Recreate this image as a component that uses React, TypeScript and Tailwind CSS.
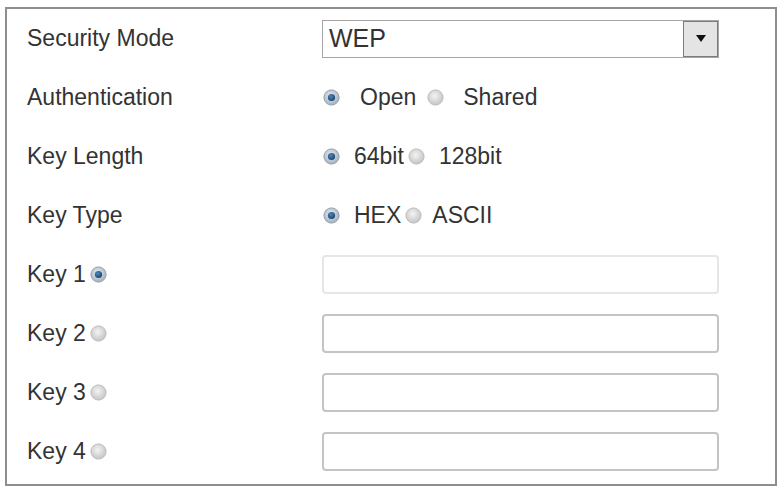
import * as React from 'react';

function Radio({ checked }: { checked?: boolean }) {
    return (
        <svg width="17" height="17" viewBox="0 0 17 17" className="shrink-0">
            <defs>
                <radialGradient id="rOff" cx="45%" cy="40%" r="60%">
                    <stop offset="0%" stopColor="#f4f4f4" />
                    <stop offset="100%" stopColor="#c4c4c4" />
                </radialGradient>
                <radialGradient id="rOn" cx="45%" cy="40%" r="60%">
                    <stop offset="0%" stopColor="#e8eef4" />
                    <stop offset="100%" stopColor="#a3b0bd" />
                </radialGradient>
                <radialGradient id="rDot" cx="40%" cy="35%" r="65%">
                    <stop offset="0%" stopColor="#4f86b8" />
                    <stop offset="100%" stopColor="#1c466e" />
                </radialGradient>
            </defs>
            <circle cx="8.5" cy="8.5" r="7.6" fill={checked ? 'url(#rOn)' : 'url(#rOff)'} stroke={checked ? '#939fab' : '#bdbdbd'} strokeWidth="1" />
            {checked && <circle cx="8.5" cy="8.5" r="3.6" fill="url(#rDot)" />}
        </svg>
    );
}

function Row({ label, children }: { label: React.ReactNode; children?: React.ReactNode }) {
    return (
        <div className="flex items-center h-[59px]">
            <div className="w-[315px] pl-[20px] flex items-center shrink-0">{label}</div>
            <div className="flex items-center">{children}</div>
        </div>
    );
}

function KeyInput({ faint }: { faint?: boolean }) {
    return (
        <div
            className={
                faint
                    ? 'w-[397px] h-[39px] rounded-[4px] border-2 border-[#e6e6e6] bg-white'
                    : 'w-[397px] h-[39px] rounded-[4px] border-2 border-[#c4c4c4] bg-white'
            }
        />
    );
}

export default function App() {
    return (
        <div className="w-[778px] h-[490px] bg-white pt-[7px] pl-[5px]" style={{ fontFamily: '"Liberation Sans", Arial, sans-serif' }}>
            <div className="w-[772px] h-[479px] border-2 border-[#8e8e8e] text-[23px] text-[#333] leading-none">
                <Row label="Security Mode">
                    <div className="w-[397px] h-[38px] border border-[#a6a6a6] flex items-stretch bg-white">
                        <div className="flex-1 flex items-center pl-[6px] text-[25px] text-[#333]">WEP</div>
                        <div className="w-[35px] border border-[#7c7c7c] bg-[#e4e4e4] flex items-center justify-center">
                            <svg width="10" height="7" viewBox="0 0 10 7">
                                <path d="M0 0 L10 0 L5 7 Z" fill="#111" />
                            </svg>
                        </div>
                    </div>
                </Row>
                <Row label="Authentication">
                    <div className="pl-[1px] flex items-center">
                        <Radio checked />
                        <span className="ml-[20px]">Open</span>
                        <span className="ml-[11px]"><Radio /></span>
                        <span className="ml-[19px]">Shared</span>
                    </div>
                </Row>
                <Row label="Key Length">
                    <div className="pl-[1px] flex items-center">
                        <Radio checked />
                        <span className="ml-[14px]">64bit</span>
                        <span className="ml-[4px]"><Radio /></span>
                        <span className="ml-[14px]">128bit</span>
                    </div>
                </Row>
                <Row label="Key Type">
                    <div className="pl-[1px] flex items-center">
                        <Radio checked />
                        <span className="ml-[14px]">HEX</span>
                        <span className="ml-[4px]"><Radio /></span>
                        <span className="ml-[10px]">ASCII</span>
                    </div>
                </Row>
                <Row label={<><span>Key 1</span><span className="ml-[4px]"><Radio checked /></span></>}>
                    <KeyInput faint />
                </Row>
                <Row label={<><span>Key 2</span><span className="ml-[4px]"><Radio /></span></>}>
                    <KeyInput />
                </Row>
                <Row label={<><span>Key 3</span><span className="ml-[4px]"><Radio /></span></>}>
                    <KeyInput />
                </Row>
                <Row label={<><span>Key 4</span><span className="ml-[4px]"><Radio /></span></>}>
                    <KeyInput />
                </Row>
            </div>
        </div>
    );
}
